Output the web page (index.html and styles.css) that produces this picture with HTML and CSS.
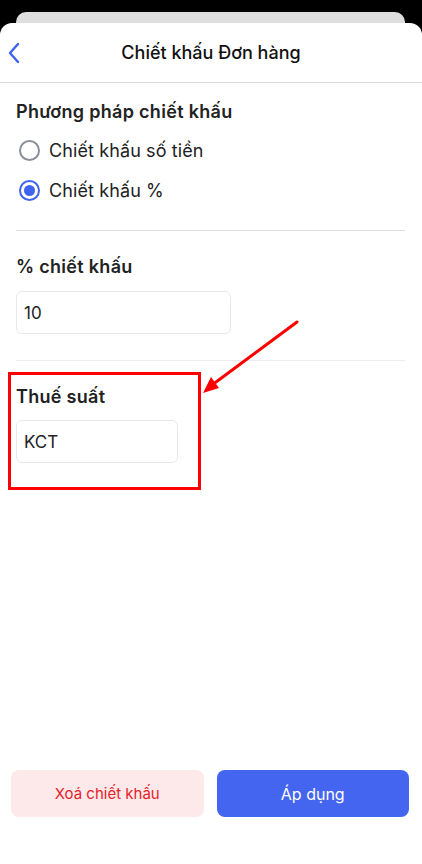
FILE: index.html
```html
<!DOCTYPE html>
<html lang="vi">
<head>
<meta charset="utf-8">
<link rel="stylesheet" href="styles.css">
</head>
<body>
<div class="back-card"></div>
<div class="sheet">
  <header class="header">
    <svg class="back" width="14" height="22" viewBox="0 0 14 22"><path d="M11 2 L3 11 L11 20" fill="none" stroke="#3f63ee" stroke-width="2.4" stroke-linecap="round" stroke-linejoin="round"/></svg>
    <h1 class="title">Chiết khấu Đơn hàng</h1>
  </header>
  <main class="content">
    <section class="section s1">
      <div class="label">Phương pháp chiết khấu</div>
      <div class="radio-row"><span class="radio"></span><span class="radio-text">Chiết khấu số tiền</span></div>
      <div class="radio-row"><span class="radio checked"></span><span class="radio-text">Chiết khấu %</span></div>
    </section>
    <section class="section s2">
      <div class="label">% chiết khấu</div>
      <div class="input wide">10</div>
    </section>
    <section class="section s3">
      <div class="label">Thuế suất</div>
      <div class="input narrow">KCT</div>
    </section>
  </main>
  <footer class="footer">
    <button class="btn btn-danger">Xoá chiết khấu</button>
    <button class="btn btn-primary">Áp dụng</button>
  </footer>
</div>
<svg class="annot" width="422" height="864" viewBox="0 0 422 864">
  <rect x="9.5" y="373.5" width="190" height="115" fill="none" stroke="#ff0000" stroke-width="3"/>
  <line x1="297" y1="322" x2="212" y2="385" stroke="#ff0000" stroke-width="3" stroke-linecap="round"/>
  <polygon points="203,393 219,388 211,377" fill="#ff0000"/>
</svg>
</body>
</html>
```
FILE: styles.css
```css
* { box-sizing: border-box; }
html, body { margin: 0; padding: 0; }
body {
  width: 422px;
  height: 864px;
  background: #000;
  font-family: Inter, "Noto Sans", "Liberation Sans", sans-serif;
  color: #222;
  position: relative;
  overflow: hidden;
  padding-top: 12px;
  display: flex;
  flex-direction: column;
}
.back-card {
  height: 11px;
  margin: 0 17px 0 16px;
  background: #dedede;
  border-radius: 10px 10px 0 0;
  flex: none;
}
.sheet {
  flex: 1;
  background: #fff;
  border-radius: 12px 12px 0 0;
  display: flex;
  flex-direction: column;
}
.header {
  height: 60px;
  border-bottom: 1px solid #d9d9d9;
  display: flex;
  align-items: center;
  justify-content: center;
  position: relative;
}
.back {
  position: absolute;
  left: 7px;
  top: 19px;
}
.title {
  margin: 0;
  font-size: 18px;
  font-weight: 500;
  color: #111;
}
.content {
  padding: 0 17px 0 16px;
}
.section { border-bottom: 1px solid #dcdcdc; }
.s1 { padding: 18px 0 20px; }
.s2 { padding: 25px 0 26px; border-bottom-color: #ececec; }
.s3 { padding: 25px 0 0; border-bottom: none; }
.label {
  font-size: 18px;
  line-height: 22px;
  font-weight: 600;
  color: #222;
  letter-spacing: 0.3px;
}
.radio-row {
  height: 40px;
  display: flex;
  align-items: center;
  gap: 9px;
  padding-left: 3px;
}
.s1 .label { margin-bottom: 7px; }
.radio {
  width: 21px;
  height: 21px;
  border-radius: 50%;
  border: 2px solid #8a8f99;
  display: flex;
  align-items: center;
  justify-content: center;
  flex: none;
}
.radio.checked { border-color: #3f63ee; }
.radio.checked::after {
  content: "";
  width: 11px;
  height: 11px;
  border-radius: 50%;
  background: #3f63ee;
}
.radio-text {
  font-size: 18px;
  color: #222;
  letter-spacing: 0.1px;
}
.input {
  margin-top: 13px;
  height: 43px;
  border: 1px solid #e8e8e8;
  border-radius: 6px;
  display: flex;
  align-items: center;
  padding-left: 7px;
  font-size: 17px;
  color: #222;
}
.wide { width: 215px; }
.narrow { width: 162px; margin-top: 12px; }
.footer {
  margin-top: auto;
  display: flex;
  gap: 13px;
  padding: 0 13px 47px 11px;
}
.btn {
  flex: 1;
  height: 47px;
  border: none;
  border-radius: 8px;
  font-family: inherit;
  font-size: 15px;
  font-weight: 400;
}
.btn-danger { background: #fde9e9; color: #e5222a; }
.btn-primary { background: #4465ef; color: #fff; font-size: 16px; }
.annot {
  position: absolute;
  left: 0;
  top: 0;
  pointer-events: none;
}
```
